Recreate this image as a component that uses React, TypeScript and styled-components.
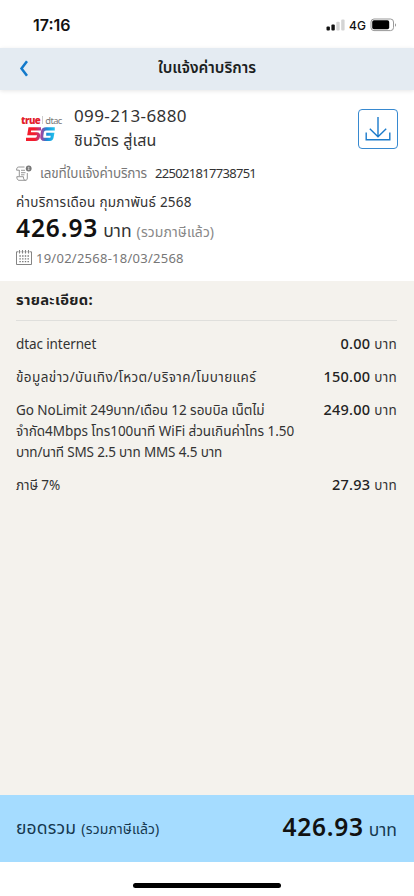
import React from "react";
import styled, { createGlobalStyle } from "styled-components";

type Charge = {
  label: string[];
  amount: string;
  tracks: number[];
};

const charges: Charge[] = [
  { label: ["dtac internet"], amount: "0.00", tracks: [-0.1] },
  { label: ["ข้อมูลข่าว/บันเทิง/โหวต/บริจาค/โมบายแคร์"], amount: "150.00", tracks: [0.43] },
  {
    label: [
      "Go NoLimit 249บาท/เดือน 12 รอบบิล เน็ตไม่",
      "จำกัด4Mbps โทร100นาที WiFi ส่วนเกินค่าโทร 1.50",
      "บาท/นาที SMS 2.5 บาท MMS 4.5 บาท",
    ],
    amount: "249.00",
    tracks: [-0.06, -0.03, -0.15],
  },
  { label: ["ภาษี 7%"], amount: "27.93", tracks: [-0.1] },
];

const StatusIcons: React.FC = () => (
  <svg width="72" height="16" viewBox="0 0 72 16">
    <rect x="0.5" y="9.4" width="3.4" height="4.2" rx="1" fill="#111" />
    <rect x="5.4" y="7.4" width="3.4" height="6.2" rx="1" fill="#111" />
    <rect x="10.3" y="4.8" width="3.4" height="8.8" rx="1" fill="#d4d4d4" />
    <rect x="15.2" y="2.5" width="3.4" height="11.1" rx="1" fill="#d4d4d4" />
    <text x="23" y="12.8" fontSize="12" fontWeight="500" fontFamily="Inter, sans-serif" fill="#111">4G</text>
    <rect x="45" y="2" width="22.5" height="11.6" rx="3" fill="none" stroke="#999" />
    <rect x="46.2" y="3.3" width="17" height="9" rx="1.8" fill="#000" />
    <path d="M69 6.2v3.6c1.4-.6 1.4-3 0-3.6z" fill="#999" />
  </svg>
);

const FiveG: React.FC = () => (
  <svg width="30" height="15" viewBox="0 0 30 15">
    <defs>
      <linearGradient id="fiveg" gradientUnits="userSpaceOnUse" x1="0" x2="29" y1="0" y2="0">
        <stop offset="0.3" stopColor="#f31d2d" />
        <stop offset="0.52" stopColor="#a8409c" />
        <stop offset="0.72" stopColor="#168cd8" />
        <stop offset="1" stopColor="#25c7ee" />
      </linearGradient>
    </defs>
    <g fill="none" stroke="url(#fiveg)" strokeWidth="3.1">
      <path d="M15 1.9H3.8L3 6.8h7.8q2.1 0 1.7 2.5-.4 3.1-3.2 3.1H0" />
      <path d="M28.8 1.9H20q-3 0-3.6 2.9l-.6 4.1q-.5 3.5 2.6 3.5h5.5q1.8 0 2.1-1.8l.6-3.4h-6.4" />
    </g>
  </svg>
);

const BillIcon: React.FC = () => (
  <svg width="16" height="16" viewBox="0 0 16 16" fill="none" stroke="#8a8a8a" strokeWidth="0.9">
    <path d="M8.5 2H2.8C1.2 2 .6 3.1.6 5.2h2.7M3.3 5v6M11.3 8v5c0 1.5-.5 2.3-1.8 2.3M3 15.3h6.6c-1.6 0-2.2-1.5-2.2-3.6H.8c0 2.1.7 3.6 2.2 3.6z" />
    <path d="M5 5.3h4M5 7.7h4.5M5 9.8h3.5" />
    <circle cx="12.7" cy="3.5" r="2.9" fill="#777" stroke="none" />
    <path d="M12.7 1.8v3.4M11.7 2.7h1.8M11.8 4.4h1.8" stroke="#ddd" strokeWidth="0.6" />
  </svg>
);

const CalendarIcon: React.FC = () => (
  <svg width="16" height="15" viewBox="0 0 16 15" fill="none" stroke="#777" strokeWidth="0.9">
    <path d="M2.5 1.8H.5v12.7h15V1.8h-2" />
    <path d="M3.5 0v3.5M6.5 0v3.5M9.5 0v3.5M12.5 0v3.5M4.5 1.8h1M7.5 1.8h1M10.5 1.8h1" />
    <path d="M3.4 6h9.8M3.4 8.8h9.8M3.4 11.6h9.8" strokeWidth="1.3" strokeDasharray="1.4 1.3" />
  </svg>
);

const App: React.FC = () => {
  return (
    <>
      <GlobalStyle />
      <Screen>
        <StatusBar>
          <Clock>17:16</Clock>
          <StatusIcons />
        </StatusBar>

        <Header>
          <BackButton aria-label="ย้อนกลับ">
            <svg width="10" height="17" viewBox="0 0 10 17" fill="none" stroke="#1279cb" strokeWidth="2.5">
              <path d="M8 1.2 2.5 8.5 8 15.8" />
            </svg>
          </BackButton>
          <Title>ใบแจ้งค่าบริการ</Title>
        </Header>

        <Summary>
          <Account>
            <Brand>
              <BrandName>
                <b>true</b>
                <i />
                <span>dtac</span>
              </BrandName>
              <FiveG />
            </Brand>
            <Owner>
              <Text $size={17} $line={25} $track={0.4}>099-213-6880</Text>
              <Text $size={16} $line={25} $track={0.1}>ชินวัตร สู่เสน</Text>
            </Owner>
            <DownloadButton aria-label="ดาวน์โหลด">
              <svg width="26" height="26" viewBox="0 0 26 26" fill="none" stroke="#1b7bcb" strokeWidth="1.4">
                <path d="M13 1v20M4.8 12.7 13 20.7l8.2-8M1.2 16.5v7.3h23.6v-7.3" />
              </svg>
            </DownloadButton>
          </Account>
          <InvoiceRow>
            <BillIcon />
            <Text $size={13.5} $line={20} $color="#777" $track={-0.15}>เลขที่ใบแจ้งค่าบริการ</Text>
            <Text $size={13} $line={20} $track={-0.7}>225021817738751</Text>
          </InvoiceRow>
          <Text $size={13.5} $line={20} $track={0.25}>ค่าบริการเดือน กุมภาพันธ์ 2568</Text>
          <AmountRow>
            <Text $size={24.5} $line={31} $weight={600} $color="#111" $track={0.9}>426.93</Text>
            <Text $size={17.5} $line={31}>บาท</Text>
            <Text $size={14} $line={31} $color="#888" $track={0.1}>(รวมภาษีแล้ว)</Text>
          </AmountRow>
          <PeriodRow>
            <CalendarIcon />
            <Text $size={13} $line={20} $color="#777" $track={0.25}>19/02/2568-18/03/2568</Text>
          </PeriodRow>
        </Summary>

        <Details>
          <DetailsTitle>รายละเอียด:</DetailsTitle>
          {charges.map((charge) => (
            <ChargeRow key={charge.amount}>
              <ChargeLabel>
                {charge.label.map((line, i) => (
                  <Text key={line} $size={13.5} $line={21} $track={charge.tracks[i]}>{line}</Text>
                ))}
              </ChargeLabel>
              <ChargeAmount>
                <Text $size={14.5} $line={21} $weight={500} $color="#222" $track={0.2}>{charge.amount}</Text>
                <Text $size={13.5} $line={21} $track={0.3}>บาท</Text>
              </ChargeAmount>
            </ChargeRow>
          ))}
        </Details>

        <Total>
          <TotalLabel>
            <Text $size={17.5} $line={30} $color="#16384f" $track={0.2}>ยอดรวม</Text>
            <Text $size={14} $line={30} $color="#16384f" $track={0.15}>(รวมภาษีแล้ว)</Text>
          </TotalLabel>
          <AmountRow>
            <Text $size={24.5} $line={30} $weight={600} $color="#111" $track={0.7}>426.93</Text>
            <Text $size={17.5} $line={30} $color="#16384f">บาท</Text>
          </AmountRow>
        </Total>

        <HomeArea>
          <HomeBar />
        </HomeArea>
      </Screen>
    </>
  );
};

const GlobalStyle = createGlobalStyle`
  *{
    box-sizing:border-box;
  }
  body{
    margin:0;
    background:#fff;
    font-family:"Noto Sans", "Noto Sans Thai", sans-serif;
  }
`;

const Screen = styled.main`
  width:414px;
  height:896px;
  display:flex;
  flex-direction:column;
  overflow:hidden;
  background:#fff;
`;

const Text = styled.span<{ $size: number; $line: number; $weight?: number; $color?: string; $track?: number }>`
  display:block;
  font-size:${(p) => p.$size}px;
  line-height:${(p) => p.$line}px;
  font-weight:${(p) => p.$weight || 400};
  color:${(p) => p.$color || "#333"};
  letter-spacing:${(p) => p.$track || 0}px;
  white-space:nowrap;
`;

const StatusBar = styled.div`
  height:48px;
  flex:none;
  padding:2px 16px 0 33px;
  display:flex;
  align-items:center;
  justify-content:space-between;
`;

const Clock = styled.span`
  font-family:Inter, sans-serif;
  font-size:16px;
  font-weight:600;
  color:#111;
`;

const Header = styled.header`
  height:42px;
  flex:none;
  display:grid;
  grid-template-columns:60px 1fr 60px;
  align-items:center;
  padding-bottom:2px;
  background:#e4ebf2;
  box-shadow:0 1px 4px rgba(0, 0, 0, 0.1);
`;

const BackButton = styled.button`
  padding:0 0 0 19px;
  border:0;
  background:none;
  display:flex;
`;

const Title = styled.h1`
  margin:0;
  font-size:15.4px;
  line-height:24px;
  font-weight:600;
  text-align:center;
  color:#1b1e22;
`;

const Summary = styled.section`
  height:191px;
  flex:none;
  padding:13px 16px 0;
`;

const Account = styled.div`
  display:flex;
  height:55px;
`;

const Brand = styled.div`
  width:58px;
  padding:10px 0 0 5px;
  svg{
    display:block;
    margin-left:5px;
  }
`;

const BrandName = styled.div`
  display:flex;
  align-items:center;
  height:14px;
  font-size:9.3px;
  letter-spacing:-0.6px;
  b{
    color:#e3202b;
    font-size:9.6px;
    font-weight:900;
    letter-spacing:-0.5px;
  }
  i{
    width:1px;
    height:8px;
    margin:0 2px;
    background:#ccc;
  }
  span{
    color:#777;
  }
`;

const Owner = styled.div`
  flex:1;
`;

const DownloadButton = styled.button`
  width:40px;
  height:40px;
  margin-top:6px;
  padding:0;
  display:flex;
  align-items:center;
  justify-content:center;
  border:1px solid #3789d0;
  border-radius:4px;
  background:#fff;
`;

const InvoiceRow = styled.div`
  height:30px;
  margin-bottom:4px;
  display:flex;
  align-items:center;
  gap:8px;
`;

const AmountRow = styled.div`
  display:flex;
  align-items:baseline;
  gap:5px;
`;

const PeriodRow = styled.div`
  display:flex;
  align-items:center;
  gap:4px;
  height:21px;
`;

const Details = styled.section`
  flex:1;
  padding:0 17px 0 16px;
  background:#f4f2ed;
`;

const DetailsTitle = styled.h2`
  height:40px;
  margin:0 0 13px;
  border-bottom:1px solid #dfdfdc;
  font-size:14.8px;
  line-height:37px;
  font-weight:700;
  letter-spacing:0.3px;
  color:#222;
`;

const ChargeRow = styled.div`
  display:flex;
  justify-content:space-between;
  align-items:flex-start;
  margin-bottom:12px;
`;

const ChargeLabel = styled.div`
  min-width:0;
`;

const ChargeAmount = styled.div`
  display:flex;
  align-items:baseline;
  gap:4px;
  height:21px;
  margin-top:-1px;
`;

const Total = styled.footer`
  height:67px;
  flex:none;
  padding:0 17px 2px 16px;
  display:flex;
  align-items:center;
  justify-content:space-between;
  background:#a5dcff;
`;

const TotalLabel = styled.div`
  display:flex;
  align-items:baseline;
  gap:5px;
`;

const HomeArea = styled.div`
  height:34px;
  flex:none;
  display:flex;
  justify-content:center;
  padding-top:21px;
`;

const HomeBar = styled.div`
  width:148px;
  height:5px;
  border-radius:3px;
  background:#000;
`;

export default App;
